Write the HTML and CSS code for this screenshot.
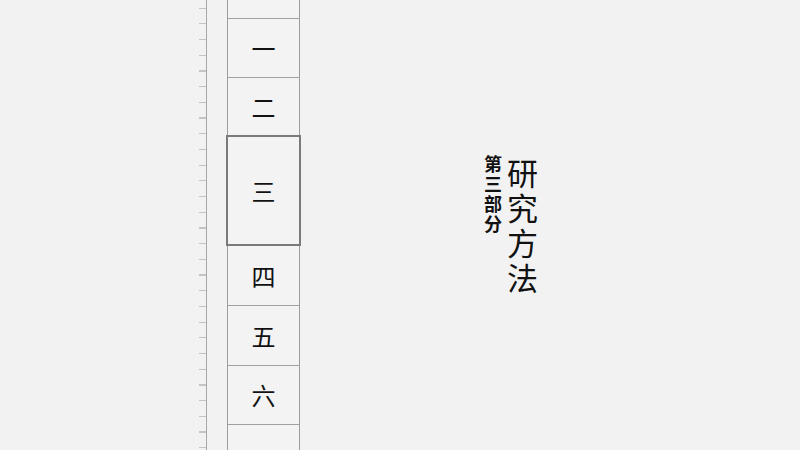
FILE: index.html
```html
<!DOCTYPE html>
<html lang="zh">
<head>
<meta charset="utf-8">
<link rel="stylesheet" href="styles.css">
</head>
<body>
<div class="page">
  <div class="ruler"></div>
  <div class="strip">
    <div class="cell c-top"></div>
    <div class="cell c-one">一</div>
    <div class="cell c-two">二</div>
    <div class="cell c-three">三</div>
    <div class="cell c-four">四</div>
    <div class="cell c-five">五</div>
    <div class="cell c-six">六</div>
    <div class="cell c-rest"></div>
  </div>
  <div class="content">
    <div class="title">
      <div class="sub">第三部分</div>
      <div class="main">研究方法</div>
    </div>
  </div>
</div>
</body>
</html>
```
FILE: styles.css
```css
html, body {
  margin: 0;
  padding: 0;
  background: #f2f2f2;
}
.page {
  width: 800px;
  height: 450px;
  display: flex;
  overflow: hidden;
  font-family: "Noto Sans CJK SC", "Noto Sans", sans-serif;
  color: #111;
}
.ruler {
  margin-left: 199px;
  width: 7px;
  height: 450px;
  border-right: 1px solid #a8a8a8;
  background: repeating-linear-gradient(to bottom,
    transparent 0, transparent 7.5px,
    #c4c4c4 7.5px, #c4c4c4 8.7px,
    transparent 8.7px, transparent 15.7px);
}
.strip {
  margin-left: 20px;
  width: 71px;
  height: 450px;
  border-left: 1px solid #9c9c9c;
  border-right: 1px solid #9c9c9c;
  display: flex;
  flex-direction: column;
}
.cell {
  box-sizing: border-box;
  border-bottom: 1px solid #a0a0a0;
  display: flex;
  align-items: center;
  justify-content: center;
  font-size: 24px;
  line-height: 1;
  background: #f3f3f3;
  flex-shrink: 0;
}
.c-top { height: 19px; }
.c-one { height: 59px; }
.c-two { height: 57px; border-bottom: none; }
.c-three {
  height: 111px;
  margin: 0 -2px 0 -2px;
  border: 2px solid #7a7a7a;
}
.c-four { height: 60px; }
.c-five { height: 60px; }
.c-six { height: 59px; }
.c-rest { flex: 1; border-bottom: none; }
.content {
  flex: 1;
}
.title {
  margin-left: 184px;
  margin-top: 155px;
  display: flex;
  gap: 5px;
  align-items: flex-start;
}
.sub {
  writing-mode: vertical-rl;
  font-size: 18px;
  font-weight: 700;
  letter-spacing: 2px;
  line-height: 18px;
  width: 18px;
}
.main {
  writing-mode: vertical-rl;
  font-size: 31px;
  font-weight: 400;
  letter-spacing: 4px;
  line-height: 31px;
  width: 31px;
  margin-top: 3px;
}
```
